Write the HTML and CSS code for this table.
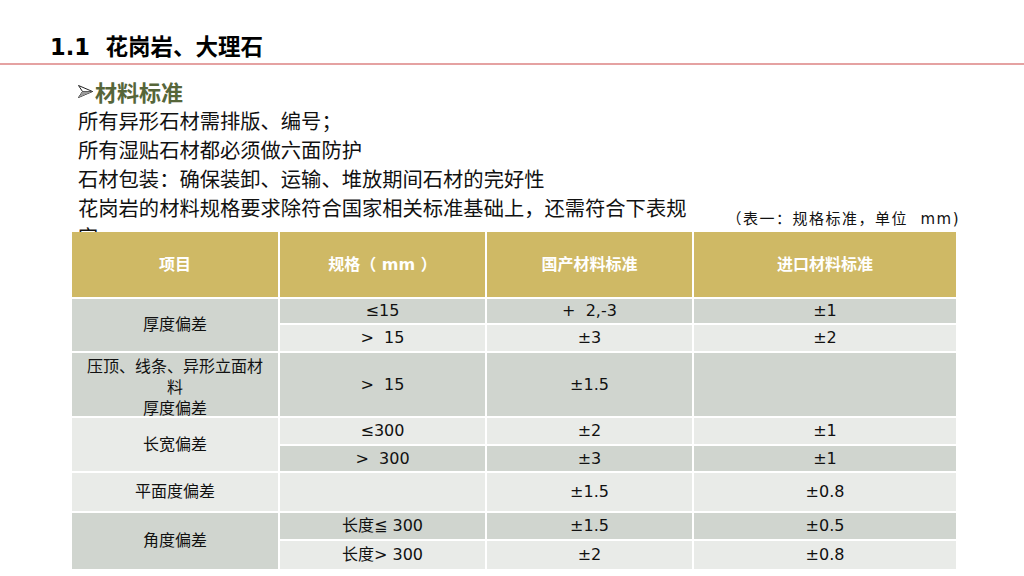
FILE: index.html
```html
<!DOCTYPE html>
<html lang="zh-CN">
<head>
<meta charset="utf-8">
<title>1.1 花岗岩、大理石</title>
<link rel="stylesheet" href="styles.css">
</head>
<body>
<header class="title-bar">
  <h1 class="title">1.1&nbsp; 花岗岩、大理石</h1>
</header>
<section class="intro">
  <div class="intro-text">
    <h2 class="section-head"><svg class="arrow" width="15" height="13" viewBox="0 0 15 13"><polygon points="0.5,0.5 14.5,6.5 0.5,12.5 4.5,6.5" fill="#ffffff" stroke="#222222" stroke-width="1"/><line x1="4.5" y1="6.5" x2="14.5" y2="6.5" stroke="#222222" stroke-width="1"/><polygon points="4.5,6.5 14.5,6.5 0.5,12.5" fill="#9a9a9a"/></svg>材料标准</h2>
    <p class="line">所有异形石材需排版、编号；</p>
    <p class="line">所有湿贴石材都必须做六面防护</p>
    <p class="line">石材包装：确保装卸、运输、堆放期间石材的完好性</p>
    <p class="line">花岗岩的材料规格要求除符合国家相关标准基础上，还需符合下表规定</p>
  </div>
  <div class="caption">（表一：规格标准，单位&nbsp; mm)</div>
</section>
<div class="spec-table">
  <div class="cell head">项目</div>
  <div class="cell head">规格（ mm ）</div>
  <div class="cell head">国产材料标准</div>
  <div class="cell head">进口材料标准</div>

  <div class="cell dark span2">厚度偏差</div>
  <div class="cell dark">≤15</div>
  <div class="cell dark">+&nbsp; 2,-3</div>
  <div class="cell dark">±1</div>
  <div class="cell light">&gt;&nbsp; 15</div>
  <div class="cell light">±3</div>
  <div class="cell light">±2</div>

  <div class="cell dark wrap-cell"><span>压顶、线条、异形立面材料<br>厚度偏差</span></div>
  <div class="cell dark">&gt;&nbsp; 15</div>
  <div class="cell dark">±1.5</div>
  <div class="cell dark"></div>

  <div class="cell light span2">长宽偏差</div>
  <div class="cell light">≤300</div>
  <div class="cell light">±2</div>
  <div class="cell light">±1</div>
  <div class="cell dark">&gt;&nbsp; 300</div>
  <div class="cell dark">±3</div>
  <div class="cell dark">±1</div>

  <div class="cell light">平面度偏差</div>
  <div class="cell light"></div>
  <div class="cell light">±1.5</div>
  <div class="cell light">±0.8</div>

  <div class="cell dark span2">角度偏差</div>
  <div class="cell dark">长度≦ 300</div>
  <div class="cell dark">±1.5</div>
  <div class="cell dark">±0.5</div>
  <div class="cell light">长度&gt; 300</div>
  <div class="cell light">±2</div>
  <div class="cell light">±0.8</div>
</div>
</body>
</html>
```
FILE: styles.css
```css
html, body {
  margin: 0;
  padding: 0;
  background: #ffffff;
}
body {
  width: 1024px;
  height: 576px;
  overflow: hidden;
  font-family: "DejaVu Sans", "Noto Sans CJK SC", sans-serif;
  color: #111111;
}
.title-bar {
  padding: 33px 0 2px 50px;
  border-bottom: 2px solid #e5a2a2;
}
.title {
  margin: 0;
  font-size: 22.5px;
  line-height: 28px;
  font-weight: bold;
  color: #000000;
}
.intro {
  display: flex;
  align-items: flex-end;
  justify-content: space-between;
  margin-left: 78px;
  width: 882px;
}
.intro-text {
  width: 618px;
  height: 167px;
  overflow: hidden;
}
.section-head {
  margin: 15px 0 0 0;
  font-size: 22px;
  line-height: 28px;
  font-weight: bold;
  color: #56663a;
  display: flex;
  align-items: flex-start;
}
.arrow {
  flex: none;
  margin: 5px 2px 0 0;
}
.line {
  margin: 0;
  font-size: 20.3px;
  line-height: 29px;
  color: #111111;
}
.caption {
  font-size: 15px;
  line-height: 18px;
  margin-bottom: 4px;
  letter-spacing: 1.5px;
  color: #111111;
  white-space: nowrap;
}
.spec-table {
  display: grid;
  grid-template-columns: 206px 205px 205px 262px;
  grid-template-rows: 65px 24px 26px 63px 26px 25px 38px 26px 28px;
  gap: 2px;
  margin-left: 72px;
  width: 884px;
}
.cell {
  display: flex;
  align-items: center;
  justify-content: center;
  text-align: center;
  font-size: 16px;
  line-height: 20px;
  color: #111111;
}
.head {
  background: #cfb965;
  color: #ffffff;
  font-weight: bold;
  font-size: 16px;
}
.dark {
  background: #d0d5cf;
}
.light {
  background: #e9ebe8;
}
.span2 {
  grid-row: span 2;
}
.wrap-cell {
  align-items: flex-start;
  overflow: hidden;
  padding: 3px 10px 0 10px;
  line-height: 21px;
}
```
